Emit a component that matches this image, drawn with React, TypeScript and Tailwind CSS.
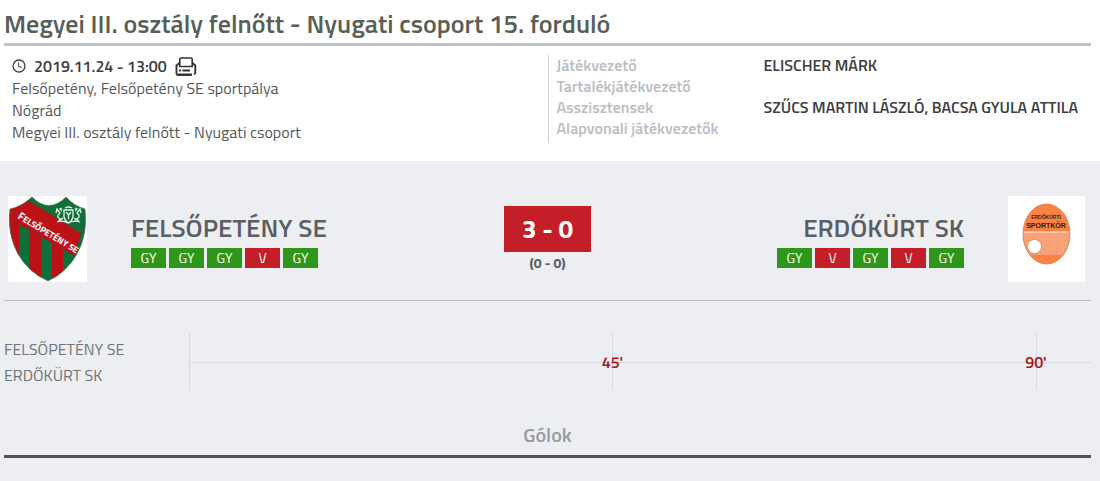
import React from "react";
import clsx from "clsx";

type Result = "GY" | "V";

const officials = [
  { role: "Játékvezető", name: "ELISCHER MÁRK" },
  { role: "Tartalékjátékvezető", name: "" },
  { role: "Asszisztensek", name: "SZŰCS MARTIN LÁSZLÓ, BACSA GYULA ATTILA" },
  { role: "Alapvonali játékvezetők", name: "" },
];

const homeForm: Result[] = ["GY", "GY", "GY", "V", "GY"];
const awayForm: Result[] = ["GY", "V", "GY", "V", "GY"];

function ClockIcon() {
  return (
    <svg width="14" height="14" viewBox="0 0 14 14" fill="none" stroke="#3f4144" strokeWidth="1.3" aria-hidden="true">
      <circle cx="7" cy="7" r="6" />
      <path d="M6.6 3.4v3.8l2.8 1.6" strokeWidth="1.1" />
    </svg>
  );
}

function PrinterIcon() {
  return (
    <svg width="22" height="19" viewBox="0 0 22 19" fill="none" stroke="#333436" aria-hidden="true">
      <path d="M4.8 9.5V2.200q0-1.200 1.200-1.200h10q1.200 0 1.200 1.200V9.500z" strokeWidth="1.6" />
      <path d="M4.500 6L1.500 8.500v8q0 1.500 1.500 1.500h13.500M17.500 6l2.800 2.500V16l-1 1.500" strokeWidth="1.9" />
      <path d="M4 13.500h2M7.400 13.500h7.600M3 17.600h14" strokeWidth="2" />
    </svg>
  );
}

function HomeCrest() {
  return (
    <svg width="79" height="86" viewBox="0 0 79 86" className="shrink-0 bg-white" role="img" aria-label="Felsőpetény SE címer">
      <defs>
        <clipPath id="shield">
          <path d="M2 13Q13 11 24 1Q41 18 58 1Q66 10 77 13Q80 38 69 58Q59 76 40 85Q20 76 10 58Q-1 38 2 13Z" />
        </clipPath>
      </defs>
      <g clipPath="url(#shield)">
        <path d="M0 0h79v86H0z" fill="#0c7038" />
        <path d="M0 20h11v66H0zM21 22h12v64H21zM44 36h11v50H44z" fill="#ba1016" />
        <path d="M0 12L18 3L73 37L67 60L0 22z" fill="#bd1118" />
        <path d="M0 22L67 60M18 5L73 39" stroke="#7d2a20" strokeWidth="0.6" />
      </g>
      <path d="M2 13Q13 11 24 1Q41 18 58 1Q66 10 77 13Q80 38 69 58Q59 76 40 85Q20 76 10 58Q-1 38 2 13Z" fill="none" stroke="#57724f" strokeWidth="0.7" />
      <g stroke="#e8f2e9" fill="none" strokeWidth="1.3">
        <path d="M56 14h9v7q-1 4-4.500 6q-3.500-2-4.500-6z" />
        <path d="M54 24q-5-2-4-5l2-2l-3-4l-1 4M54 15l-2-2l2-1M50 25l5-3M67 24q5-2 4-5l-2-2l3-4l1 4M67 15l2-2l-2-1M71 25l-5-3" />
        <path d="M57 12q3.500-2 7 0M49 26q6-2 11 1q6-3 12-1" />
        <path d="M58 16l2.500 3l2.500-3M60.500 19v4" />
      </g>
      <text x="9" y="22" transform="rotate(31 9 22)" fill="#fff" className="font-['Titillium_Web','Roboto',sans-serif] text-[11px] font-bold">
        <tspan>F</tspan>
        <tspan className="text-[9px]">ELSŐPETÉNY SE</tspan>
      </text>
    </svg>
  );
}

function AwayCrest() {
  return (
    <svg width="77" height="86" viewBox="0 0 77 86" className="shrink-0 bg-white" role="img" aria-label="Erdőkürt SK címer">
      <defs>
        <clipPath id="oval">
          <ellipse cx="38.500" cy="38" rx="23.500" ry="30" />
        </clipPath>
        <pattern id="net" width="2" height="2" patternUnits="userSpaceOnUse">
          <path d="M0 0h2M0 0v2" stroke="#e48b60" strokeWidth="0.7" />
        </pattern>
      </defs>
      <g clipPath="url(#oval)">
        <path d="M15 8h47v60H15z" fill="#fb8242" />
        <path d="M15 36h47v23H15z" fill="#fcae83" />
        <path d="M15 36h47v23H15z" fill="url(#net)" />
        <path d="M15 36h47" stroke="#fff0e5" />
      </g>
      <ellipse cx="38.500" cy="38" rx="23.500" ry="30" fill="none" stroke="#d7794b" strokeWidth="0.8" />
      <circle cx="26.500" cy="50.500" r="7" fill="#fff" stroke="#c47d58" strokeWidth="0.7" />
      <text x="38" y="23" textAnchor="middle" fill="#3a2517" className="font-['Liberation_Sans',sans-serif] text-[5px] font-bold">
        ERDŐKÜRTI
      </text>
      <text x="38" y="32" textAnchor="middle" fill="#2b1a10" className="font-['Liberation_Sans',sans-serif] text-[7px] font-bold">
        SPORTKÖR
      </text>
    </svg>
  );
}

function FormBadges({ results }: { results: Result[] }) {
  return (
    <ul className="mt-1 flex gap-[3px]">
      {results.map((result, index) => (
        <li
          key={index}
          className={clsx(
            "h-5 w-[35px] text-center text-sm leading-5 text-white",
            result === "GY" ? "bg-[#2e9618]" : "bg-[#c41e28]"
          )}
        >
          {result}
        </li>
      ))}
    </ul>
  );
}

function MinuteMark({ label }: { label: string }) {
  return (
    <div className="relative w-[47%] border-r border-[#d9dadd]">
      <span className="absolute top-1/2 right-0 translate-x-1/2 -translate-y-1/2 text-base font-semibold text-[#a8141c]">
        {label}
      </span>
    </div>
  );
}

export default function App() {
  return (
    <main className="min-h-screen bg-[#edeef2] font-['Titillium_Web','Roboto',sans-serif] text-[#5a5f66]">
      <header className="bg-white pr-[9px] pb-[18px] pl-1">
        <h1 className="border-b-3 border-[#bfc2c7] pt-2 pb-[3px] text-[26px] leading-8 font-semibold text-[#585e58]">
          Megyei III. osztály felnőtt - Nyugati csoport 15. forduló
        </h1>
        <div className="grid grid-cols-2 pt-[9px]">
          <div className="pl-2 text-base leading-[22px] text-[#55585a]">
            <div className="flex items-center">
              <ClockIcon />
              <time className="ml-2 font-semibold text-[#3b3d3f]">2019.11.24 - 13:00</time>
              <button type="button" aria-label="Nyomtatás" className="ml-2 cursor-pointer">
                <PrinterIcon />
              </button>
            </div>
            <p>Felsőpetény, Felsőpetény SE sportpálya</p>
            <p>Nógrád</p>
            <p>Megyei III. osztály felnőtt - Nyugati csoport</p>
          </div>
          <dl className="border-l border-[#d0d2d6] pb-1 pl-2 text-base leading-[21px] font-semibold">
            {officials.map((official) => (
              <div key={official.role} className="flex">
                <dt className="w-[207px] shrink-0 text-[#b9bec4]">{official.role}</dt>
                <dd className="whitespace-nowrap text-[#3d3f42]">{official.name}</dd>
              </div>
            ))}
          </dl>
        </div>
      </header>

      <div className="pr-[9px] pl-1">
        <section className="grid grid-cols-[1fr_auto_1fr] border-b border-[#babcc2] pt-[35px] pb-[18px]">
          <div className="flex pl-1">
            <HomeCrest />
            <div className="ml-11 pt-4">
              <h2 className="text-[26px] leading-8 font-semibold">FELSŐPETÉNY SE</h2>
              <FormBadges results={homeForm} />
            </div>
          </div>
          <div className="pt-[10px] text-center font-bold">
            <div className="w-[87px] bg-[#c41e28] text-[26px] leading-[46px] text-white">3 - 0</div>
            <div className="text-sm leading-[22px]">(0 - 0)</div>
          </div>
          <div className="flex justify-end pr-[6px]">
            <div className="mr-11 flex flex-col items-end pt-4">
              <h2 className="text-[26px] leading-8 font-semibold">ERDŐKÜRT SK</h2>
              <FormBadges results={awayForm} />
            </div>
            <AwayCrest />
          </div>
        </section>

        <section className="mt-8 flex">
          <div className="w-[185px] shrink-0 pt-[3px] text-base leading-[26px] text-[#6f7478]">
            <p>FELSŐPETÉNY SE</p>
            <p>ERDŐKÜRT SK</p>
          </div>
          <div className="relative flex h-[57px] flex-auto border-l border-[#d9dadd]">
            <hr className="absolute inset-x-0 top-1/2 border-[#d9dadd]" />
            <MinuteMark label="45'" />
            <MinuteMark label="90'" />
          </div>
        </section>

        <h3 className="mt-[30px] border-b-3 border-[#5b4d5f] pb-[5px] text-center text-xl leading-[30px] font-semibold text-[#999ca2]">
          Gólok
        </h3>
      </div>
    </main>
  );
}
